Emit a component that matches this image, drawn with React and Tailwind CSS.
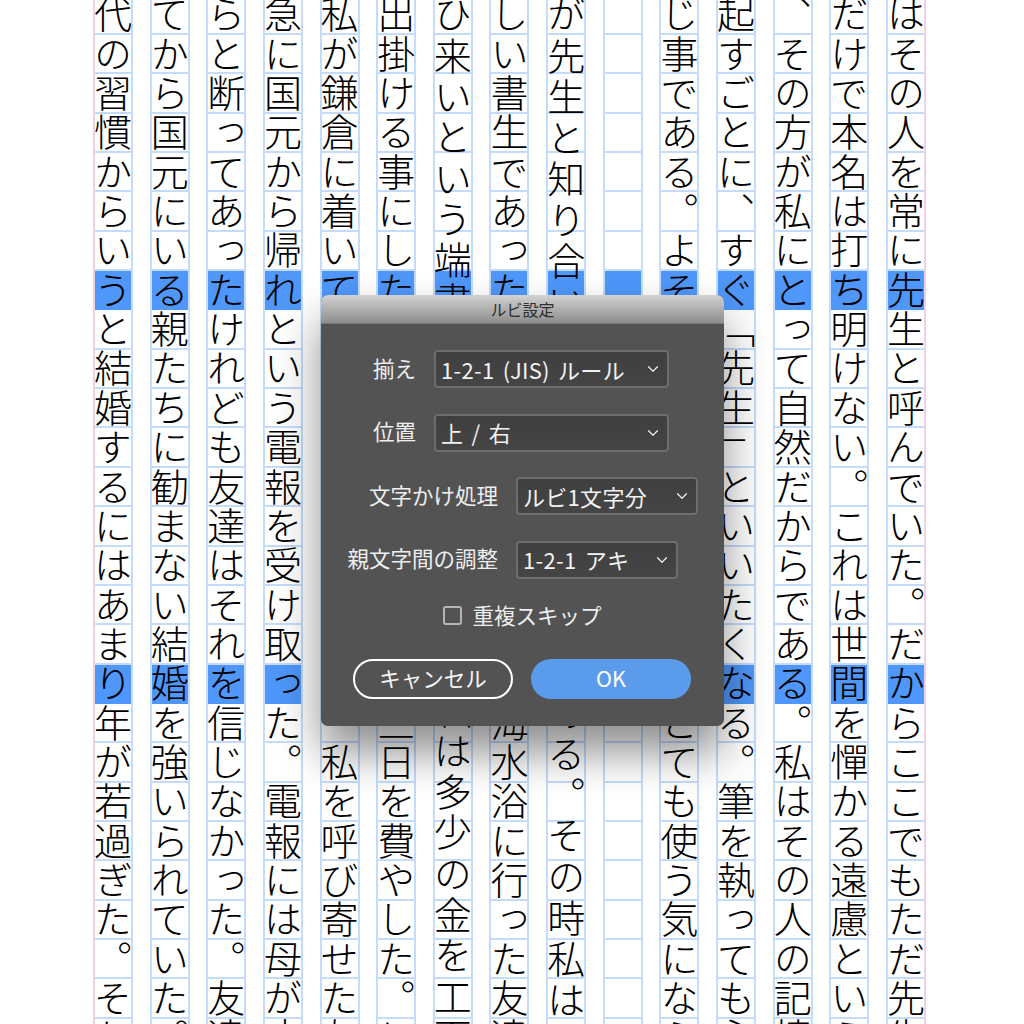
import React from 'react';
import { ChevronDown } from 'lucide-react';

// 縦書きの各列（左から右）。step は字送りのズレ(px/字)
const COLUMNS = [
  { text: '代の習慣からいうと結婚するにはあまり年が若過ぎた。それ' },
  { text: 'てから国元にいる親たちに勧まない結婚を強いられていた。' },
  { text: 'らと断ってあったけれども友達はそれを信じなかった。友達' },
  { text: '急に国元から帰れという電報を受け取った。電報には母が病' },
  { text: '私が鎌倉に着いて三日と経たないうちに、私を呼び寄せた友' },
  { text: '出掛ける事にした。私は金の工面に二、三日を費やした。と' },
  { text: 'ひ来いという端書を受け取ったので、私は多少の金を工面し', step: 1.55 },
  { text: 'しい書生であった。暑中休暇を利用して海水浴に行った友達' },
  { text: 'が先生と知り合いになったのは鎌倉である。その時私はまだ', step: 1.7 },
  { text: '' },
  { text: 'じ事である。よそよそしい頭文字などはとても使う気になら' },
  { text: '起すごとに、すぐ「先生」といいたくなる。筆を執っても心' },
  { text: '、その方が私にとって自然だからである。私はその人の記憶' },
  { text: 'だけで本名は打ち明けない。これは世間を憚かる遠慮という' },
  { text: 'はその人を常に先生と呼んでいた。だからここでもただ先生' },
];

const ROW_COUNT = 27;
const HIGHLIGHT_ROWS = [7, 17];

const Cell = ({ char, row, step }) => {
  const highlighted = HIGHLIGHT_ROWS.includes(row);
  return (
    <div
      className={`h-[39.35px] shrink-0 flex items-center justify-center border-b-2 ${
        highlighted ? 'bg-[#4f97fb] border-[#4f97fb]' : 'border-[#c4dbfb]'
      }`}
    >
      {char && (
        <span
          className="[writing-mode:vertical-rl] text-[38px] leading-[39px] font-light text-black"
          style={step ? { transform: `translateY(${(step * row).toFixed(1)}px)` } : undefined}
        >
          {char}
        </span>
      )}
    </div>
  );
};

const Column = ({ text, step, index }) => {
  const chars = Array.from(text);
  return (
    <div
      className={`w-[40px] shrink-0 flex flex-col border-x-2 border-[#c4dbfb] ${
        index === 0 ? 'border-l-[#f0d0e4]' : ''
      } ${index === COLUMNS.length - 1 ? 'border-r-[#f0d0e4]' : ''}`}
    >
      {Array.from({ length: ROW_COUNT }, (_, row) => (
        <Cell key={row} char={chars[row]} row={row} step={step} />
      ))}
    </div>
  );
};

const Select = ({ width, children }) => (
  <div
    className={`${width} h-[38px] flex items-center justify-between pl-[5px] pr-[5px] rounded-[4px] border-2 border-[#6d6d6d] bg-gradient-to-b from-[#3f3f3f] to-[#454545] text-[22px] tracking-[0.3px] [word-spacing:3px] text-[#f2f2f2] whitespace-nowrap`}
  >
    <span>{children}</span>
    <ChevronDown size={18} strokeWidth={1.6} className="text-[#eeeeee]" />
  </div>
);

const Field = ({ label, labelWidth, selectWidth, value }) => (
  <div className="flex items-center gap-[18px]">
    <div className={`${labelWidth} -mt-[3px] text-right text-[21.5px] leading-none text-[#eeeeee] whitespace-nowrap`}>{label}</div>
    <Select width={selectWidth}>{value}</Select>
  </div>
);

const RubyDialog = () => (
  <div className="absolute left-[321px] top-[295px] w-[403px] h-[431px] rounded-[7px] overflow-hidden bg-[#535353] shadow-[0_26px_45px_rgba(0,0,0,0.45)]">
    <div className="h-[29px] flex items-center justify-center bg-gradient-to-b from-[#d2d2d2] to-[#8e8e8e] border-b border-[#777777] text-[16px] text-[#2e2e2e]">
      ルビ設定
    </div>
    <div className="flex flex-col pt-[26px]">
      <div className="flex flex-col gap-[25.5px]">
        <Field label="揃え" labelWidth="w-[95px]" selectWidth="w-[235px]" value="1-2-1 (JIS) ルール" />
        <Field label="位置" labelWidth="w-[95px]" selectWidth="w-[235px]" value="上 / 右" />
        <Field label="文字かけ処理" labelWidth="w-[177px]" selectWidth="w-[182px]" value="ルビ1文字分" />
        <Field label="親文字間の調整" labelWidth="w-[177px]" selectWidth="w-[162px]" value="1-2-1 アキ" />
      </div>
      <div className="mt-[27px] h-[20px] flex items-center justify-center gap-[10px] text-[21.5px] text-[#eeeeee]">
        <span className="w-[19px] h-[19px] rounded-[3px] border-2 border-[#b5b5b5]"></span>
        <span>重複スキップ</span>
      </div>
      <div className="mt-[33px] px-[32px] flex gap-[18px]">
        <button className="w-[160px] h-[40px] rounded-full border-2 border-white text-[21.5px] text-[#f5f5f5]">
          キャンセル
        </button>
        <button className="w-[160px] h-[40px] rounded-full bg-[#5b9bec] text-[21.5px] text-white">OK</button>
      </div>
    </div>
  </div>
);

const App = () => (
  <div className="relative w-full h-[1024px] overflow-hidden bg-white font-['Noto_Sans_CJK_JP',sans-serif]">
    <div className="flex gap-[16.65px] pl-[93px] -mt-[4.3px]">
      {COLUMNS.map((col, i) => (
        <Column key={i} index={i} text={col.text} step={col.step} />
      ))}
    </div>
    <RubyDialog />
  </div>
);

export default App;
